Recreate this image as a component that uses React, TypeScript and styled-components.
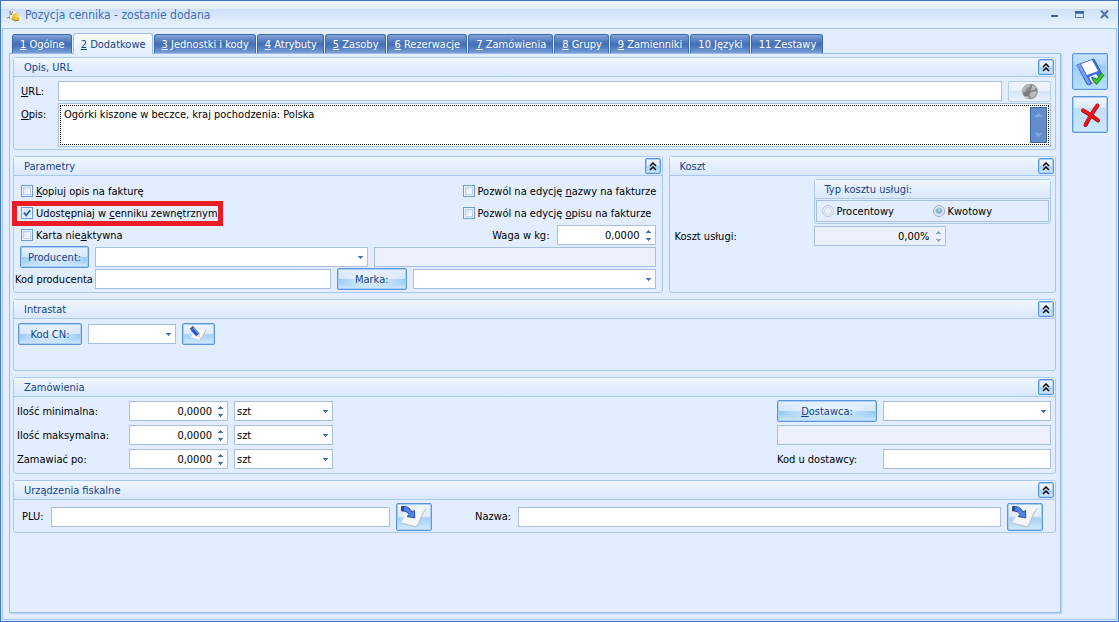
import React from "react";
import styled, { createGlobalStyle, css } from "styled-components";

const c = {
  bg: "#e2eeff",
  frame: "#3f74ba",
  line: "#a9c9f3",
  field: "#a6bfe2",
  ink: "#15428b",
};

const Global = createGlobalStyle`
  * { box-sizing: border-box; }
  body { margin: 0; background: ${c.bg}; }
  body, button, input, select, textarea {
    font-family: Tahoma, "DejaVu Sans Condensed", "DejaVu Sans", sans-serif;
    font-size: 11px;
    color: #000;
  }
`;

const Window = styled.div`
  min-height: 100vh;
  display: flex;
  flex-direction: column;
  border: 1px solid ${c.frame};
  background: ${c.bg};
`;

const TitleBar = styled.header`
  height: 27px;
  flex: none;
  display: flex;
  align-items: center;
  gap: 3px;
  padding: 0 5px;
  background: linear-gradient(#eef5fe 0, #e2edfc 8px, #cde0f8 8px, #e9f4ff 27px);
`;

const Title = styled.h1`
  margin: 0;
  flex: 1;
  font-size: 12px;
  font-weight: normal;
  color: #3e6db5;
`;

const WinButton = styled.button`
  width: 25px;
  height: 20px;
  padding: 0;
  border: 0;
  background: none;
  display: flex;
  align-items: center;
  justify-content: center;
`;

const WinButtons = styled.div`
  display: flex;
  margin-right: -4px;
`;

const Frame = styled.div`
  flex: 1;
  display: flex;
  gap: 11px;
  margin: 0 1px 1px;
  padding: 4px 8px 6px 6px;
  border: 1px solid #a3c3ee;
`;

const Main = styled.main`
  flex: 1;
  min-width: 0;
  display: flex;
  flex-direction: column;
`;

const TabStrip = styled.div`
  display: flex;
  align-items: flex-end;
  gap: 1px;
  padding-left: 3px;
  height: 20px;
`;

const Tab = styled.button<{ $active?: boolean }>`
  height: 19px;
  padding: 0 6px 0 7px;
  border: 1px solid #3b69b0;
  border-bottom: 0;
  border-radius: 3px 3px 0 0;
  color: #fff;
  white-space: nowrap;
  background: linear-gradient(#86a7da 0, #6a90cc 3px, #416eb5 9px, #5580c3 13px, #83a6dc 19px);
  ${(p) =>
    p.$active &&
    css`
      height: 21px;
      margin-bottom: -1px;
      position: relative;
      color: ${c.ink};
      border-color: #9bbdee;
      background: linear-gradient(#f8fbff, ${c.bg});
    `}
`;

const Panel = styled.div`
  flex: 1;
  display: flex;
  flex-direction: column;
  gap: 6px;
  padding: 3px 4px 6px 3px;
  border: 1px solid #9bbdee;
  box-shadow: 1px 1px 1px #b9d0f0;
`;

const Columns = styled.div`
  display: flex;
  gap: 6px;
`;

const GroupBox = styled.section<{ $grow?: number; $min?: number }>`
  display: flex;
  flex-direction: column;
  flex: ${(p) => (p.$grow ? `${p.$grow} 1 0` : "none")};
  min-width: 0;
  min-height: ${(p) => p.$min ?? 0}px;
  border: 1px solid ${c.line};
  border-radius: 3px;
`;

const GroupHead = styled.div`
  height: 19px;
  flex: none;
  display: flex;
  align-items: center;
  justify-content: space-between;
  padding: 0 1px 0 10px;
  border-bottom: 1px solid ${c.line};
  background: linear-gradient(#f0f7ff, #d8e8fd);
`;

const GroupTitle = styled.h2`
  margin: 0;
  font-size: 11px;
  font-weight: normal;
  color: ${c.ink};
`;

const GroupBody = styled.div<{ $gap?: number; $pad: string }>`
  display: flex;
  flex-direction: column;
  gap: ${(p) => p.$gap ?? 0}px;
  padding: ${(p) => p.$pad};
`;

const glossy = css`
  border: 1px solid #5e96dd;
  border-radius: 2px;
  box-shadow: inset 0 0 0 1px #a9cdf5;
  background: linear-gradient(#eff7ff 0, #dcebfc 48%, #b4d7f6 50%, #a8d2f5 60%, #d3edfd 100%);
`;

const Collapse = styled.button`
  ${glossy}
  width: 16px;
  height: 16px;
  padding: 0;
  display: flex;
  align-items: center;
  justify-content: center;
`;

const Button = styled.button<{ $w: number }>`
  ${glossy}
  width: ${(p) => p.$w}px;
  height: 22px;
  flex: none;
  padding: 0;
  color: ${c.ink};
  display: flex;
  align-items: center;
  justify-content: center;
`;

const CaptionButton = styled(Button)`
  background: radial-gradient(ellipse at center, rgba(235, 245, 255, 0.75) 25%, rgba(235, 245, 255, 0) 70%),
    linear-gradient(#e6f1fe 0, #d3e5fa 48%, #93c4f2 50%, #a9d4f7 75%, #d3edfd 100%);
`;

const GlobeButton = styled(Button)`
  height: 21px;
  border-color: #b4cdee;
  box-shadow: none;
  background: linear-gradient(#f1f6fd 0, #e7f0fb 48%, #d6e5f6 50%, #e8f3fd 100%);
`;

const ImportButton = styled(Button)`
  height: 28px;
`;

const SideBar = styled.aside`
  flex: none;
  display: flex;
  flex-direction: column;
  gap: 6px;
  padding-top: 20px;
`;

const SideButton = styled(Button)<{ $hot?: boolean }>`
  height: 37px;
  background: ${(p) =>
    p.$hot
      ? "linear-gradient(#c6e2fc 0, #b3d8fa 30%, #9accf6 32%, #b5e0fb 100%)"
      : "linear-gradient(#eff7ff 0, #dcebfc 30%, #c0dff8 32%, #c9e8fc 100%)"};
`;

const Row = styled.div<{ $gap?: number; $h?: number; $top?: boolean }>`
  display: flex;
  align-items: ${(p) => (p.$top ? "flex-start" : "center")};
  gap: ${(p) => p.$gap ?? 6}px;
  min-height: ${(p) => p.$h ?? 22}px;
`;

const Lead = styled.div<{ $w: number; $inset?: number; $drop?: number }>`
  flex: none;
  width: ${(p) => p.$w}px;
  padding-left: ${(p) => p.$inset ?? 0}px;
  padding-top: ${(p) => p.$drop ?? 0}px;
  white-space: nowrap;
`;

const Spacer = styled.div`
  flex: 1;
`;

const fieldBox = css`
  height: 20px;
  border: 1px solid ${c.field};
  border-radius: 0;
  background: #fff;
  padding: 0 2px;
  outline: 0;
`;

const TextField = styled.input<{ $grow?: number; $w?: number }>`
  ${fieldBox}
  min-width: 0;
  flex: ${(p) => (p.$w ? `0 0 ${p.$w}px` : `${p.$grow ?? 1} 1 0`)};
  &:disabled {
    background: #ebf0fa;
  }
`;

const Combo = styled.div<{ $grow?: number; $w?: number }>`
  position: relative;
  min-width: 0;
  flex: ${(p) => (p.$w ? `0 0 ${p.$w}px` : `${p.$grow ?? 1} 1 0`)};
  display: flex;
  svg {
    position: absolute;
    right: 5px;
    top: 9px;
    pointer-events: none;
  }
`;

const Select = styled.select`
  ${fieldBox}
  width: 100%;
  appearance: none;
`;

const SpinBox = styled.div<{ $w: number; $off?: boolean }>`
  ${fieldBox}
  flex: none;
  width: ${(p) => p.$w}px;
  display: flex;
  background: ${(p) => (p.$off ? "#ebf0fa" : "#fff")};
  input {
    flex: 1;
    min-width: 0;
    border: 0;
    outline: 0;
    padding: 0;
    text-align: right;
    background: none;
    color: #000;
  }
`;

const SpinButtons = styled.div`
  display: flex;
  flex-direction: column;
  justify-content: center;
  gap: 4px;
  padding-left: 6px;
  width: 13px;
`;

const Arrow = styled.button`
  display: block;
  height: 4px;
  padding: 0;
  border: 0;
  background: none;
  line-height: 0;
  svg {
    display: block;
  }
`;

const MemoBox = styled.div`
  flex: 1;
  height: 44px;
  padding: 1px;
  border: 1px solid ${c.field};
  background: #fff;
`;

const MemoFocus = styled.div`
  height: 100%;
  display: flex;
  padding: 1px;
  border: 1px dotted #000;
  textarea {
    flex: 1;
    padding: 1px 2px 0;
    border: 0;
    outline: 0;
    resize: none;
    overflow: hidden;
    line-height: 14px;
    background: none;
  }
`;

const Scroller = styled.div`
  width: 17px;
  display: flex;
  flex-direction: column;
  justify-content: space-between;
  align-items: center;
  padding: 5px 0;
  border: 1px solid #3a66a8;
  background: #638dca;
`;

const Check = styled.label<{ $marked?: boolean }>`
  position: relative;
  display: flex;
  align-items: center;
  gap: 3px;
  white-space: nowrap;
  ${(p) =>
    p.$marked &&
    css`
      &::after {
        content: "";
        position: absolute;
        inset: -6px -10px -6px -9px;
        border: 5px solid #ed1c24;
      }
    `}
`;

const Tick = styled.input`
  appearance: none;
  flex: none;
  width: 12px;
  height: 12px;
  margin: 0;
  border: 1px solid #6f9bd8;
  background: linear-gradient(135deg, #d5e2f5, #fff) center / 6px 6px no-repeat, #b9d0f0;
  box-shadow: inset 0 0 0 1px #e9f2fe;
  &:checked {
    background: url("data:image/svg+xml,%3Csvg xmlns='http://www.w3.org/2000/svg' viewBox='0 0 10 10'%3E%3Cpath d='M2 4.6L4.2 7.4L8.2 2.2' fill='none' stroke='%232a62b0' stroke-width='1.8'/%3E%3C/svg%3E")
        center / 10px 10px no-repeat,
      #dce8f9;
  }
`;

const Dot = styled.input`
  appearance: none;
  flex: none;
  width: 12px;
  height: 12px;
  margin: 0;
  border: 1px solid #b4c6dd;
  border-radius: 50%;
  background: #e9eff7;
  box-shadow: inset 0 0 0 1px #f5f8fc, inset 0 0 0 2px #ccd7e6;
  &:checked {
    border-color: #93b0d2;
    background: radial-gradient(circle at 50% 40%, #b8d6e8 0, #7ba6c8 3px, #dbe7f3 4px);
  }
`;

const CostTypes = styled.div`
  display: flex;
  margin: 1px;
  height: 22px;
  padding-left: 5px;
  border: 1px solid ${c.field};
  label {
    width: 111px;
  }
`;

const RightCol = styled.div`
  flex: none;
  width: 193px;
  display: flex;
  align-items: center;
  justify-content: space-between;
`;

const WeightLabel = styled.label`
  flex: 1;
  text-align: right;
  padding-right: 7px;
`;

const Split = styled.div`
  display: flex;
  justify-content: space-between;
`;

const Stack = styled.div<{ $w: number }>`
  width: ${(p) => p.$w}px;
  display: flex;
  flex-direction: column;
  gap: 2px;
`;

const DownArrow = () => (
  <svg width="5" height="3" viewBox="0 0 5 3" shapeRendering="crispEdges">
    <path d="M0 0h5v1H0zM1 1h3v1H1zM2 2h1v1H2z" fill="#3f74ba" />
  </svg>
);

const Chevrons = () => (
  <svg width="8" height="9" viewBox="0 0 8 9" fill="none" stroke="#000" strokeWidth="1.5">
    <path d="M1 4L4 1L7 4M1 8L4 5L7 8" />
  </svg>
);

const AppIcon = () => (
  <svg width="16" height="16" viewBox="0 0 16 16">
    <path d="M4 4L7 2L12 6L9 12L3 11Z" fill="#f4f4f2" stroke="#aaa" strokeWidth=".6" />
    <path d="M1 11l3-1M4 4l1 4M7 4l-2 4" stroke="#777" strokeWidth="1" />
    <path d="M7 7l3-1 3 3v4l-4 1-3-3z" fill="#e8bf2e" />
    <ellipse cx="11" cy="9" rx="2.500" ry="1.500" fill="#f7dc6a" />
    <path d="M6 12l3 2 4-1" stroke="#9b7c10" fill="none" />
  </svg>
);

const Globe = () => (
  <svg width="18" height="17" viewBox="0 0 18 17">
    <circle cx="9" cy="8.500" r="7.800" fill="#8e8e8e" />
    <path d="M3 3.500C5 1 8 .8 10 1.200L8 4 5 6 4 9 1.600 8C1.600 6 2 4.600 3 3.500Z" fill="#b5b5b5" />
    <path d="M11 2l4 2-2 3-3 1zM10 9l4-1 2 2-3 4-3 1-1-3z" fill="#bcbcbc" />
    <path d="M2 11l4-1 1 4-1 2z" fill="#777" />
    <path d="M5 15L11 2M4 10L15 7" stroke="#747474" strokeWidth=".9" />
    <path d="M3 13l5 1-2 2z" fill="#dadada" />
  </svg>
);

const Floppy = () => (
  <svg width="30" height="30" viewBox="0 0 30 30">
    <path d="M2 8L19 2L28 19L14 28L12 27Z" fill="#3f6fe0" stroke="#2447a8" strokeWidth=".8" />
    <path d="M2 8L5 7L15 26L13.500 28Z" fill="#7ba2f5" />
    <path d="M6 7L17 3L23 14L12 18Z" fill="#fff" />
    <path d="M14 20L21 17L25 22L17 26Z" fill="#e8eef9" />
    <path d="M16 20.500l2-1 3 4-2 1z" fill="#2b4fae" />
    <path d="M18.500 21.500L21.500 25L28 17" fill="none" stroke="#1b7d12" strokeWidth="4" />
    <path d="M18.500 21.500L21.500 25L28 17" fill="none" stroke="#34cf22" strokeWidth="2.400" />
  </svg>
);

const Cross = () => (
  <svg width="24" height="26" viewBox="0 0 24 26" strokeLinecap="round" fill="none">
    <path d="M5 8.500Q13 13 20 18.500M19.500 3.500Q14 11 7.500 23" stroke="#8d1010" strokeWidth="4" />
    <path d="M5 8Q13 12.500 20 18M19.500 3Q14 10.500 7.500 22.500" stroke="#ee1616" strokeWidth="3" />
  </svg>
);

const Pencil = () => (
  <svg width="19" height="16" viewBox="0 0 19 16">
    <path d="M6 4L17 3.500L14 11L11 14L2 11Z" fill="#fafafa" />
    <path d="M17 3.500Q15 8 13.500 11L11 14" stroke="#b4b8bf" strokeWidth="1" fill="none" />
    <path d="M3.500 3L9 9" stroke="#2b59c8" strokeWidth="4.500" />
    <path d="M4.500 2L10 8" stroke="#6b93ee" strokeWidth="1.500" />
    <path d="M1.500 3.500L4.500 .6" stroke="#54585f" strokeWidth="2" />
    <path d="M7.500 10L10.500 7.500L12 12Z" fill="#e3d3bb" />
  </svg>
);

const ImportIcon = () => (
  <svg width="28" height="24" viewBox="0 0 28 24">
    <path d="M7 4L26 3.500Q21 10 19 18L16 22L1 18Q5 12 7 4Z" fill="#f5f6f8" />
    <path d="M26 3.500Q21 10 19 18L16.500 22L1 18" fill="none" stroke="#b0b5bc" strokeWidth=".9" />
    <path d="M1.500 1.500Q9 .5 12 7L14.500 5.500L14.800 13L7 11.500L9.200 9.500Q6.500 5.500 1.500 6Z" fill="#4d83ee" stroke="#25458f" strokeWidth=".9" />
    <path d="M1.500 1.500L4 1.500V6H1.500Z" fill="#344a78" />
  </svg>
);

type GroupProps = {
  title: string;
  pad: string;
  gap?: number;
  grow?: number;
  min?: number;
  children: React.ReactNode;
};

const Group = ({ title, pad, gap, grow, min, children }: GroupProps) => (
  <GroupBox $grow={grow} $min={min}>
    <GroupHead>
      <GroupTitle>{title}</GroupTitle>
      <Collapse aria-label={`Zwiń: ${title}`}>
        <Chevrons />
      </Collapse>
    </GroupHead>
    <GroupBody $pad={pad} $gap={gap}>
      {children}
    </GroupBody>
  </GroupBox>
);

type SpinProps = { id?: string; w: number; value: string; off?: boolean };

const Spin = ({ id, w, value, off }: SpinProps) => (
  <SpinBox $w={w} $off={off}>
    <input id={id} defaultValue={value} disabled={off} />
    <SpinButtons>
      {["M2 0h1v1H2zM1 1h3v1H1zM0 2h5v1H0z", "M0 0h5v1H0zM1 1h3v1H1zM2 2h1v1H2z"].map((d, i) => (
        <Arrow key={d} tabIndex={-1} disabled={off} aria-label={i ? "Mniej" : "Więcej"}>
          <svg width="5" height="3" viewBox="0 0 5 3" shapeRendering="crispEdges">
            <path d={d} fill={off ? "#8fa9cb" : "#3f74ba"} />
          </svg>
        </Arrow>
      ))}
    </SpinButtons>
  </SpinBox>
);

type DropProps = { label: string; w?: number; grow?: number; value?: string };

const Drop = ({ label, w, grow, value = "" }: DropProps) => (
  <Combo $w={w} $grow={grow}>
    <Select aria-label={label} defaultValue={value}>
      <option>{value}</option>
    </Select>
    <DownArrow />
  </Combo>
);

const tabs: [string, string][] = [
  ["1", " Ogólne"],
  ["2", " Dodatkowe"],
  ["3", " Jednostki i kody"],
  ["4", " Atrybuty"],
  ["5", " Zasoby"],
  ["6", " Rezerwacje"],
  ["7", " Zamówienia"],
  ["8", " Grupy"],
  ["9", " Zamienniki"],
  ["", "10 Języki"],
  ["", "11 Zestawy"],
];

export default function App() {
  return (
    <Window>
      <Global />
      <TitleBar>
        <AppIcon />
        <Title>Pozycja cennika - zostanie dodana</Title>
        <WinButtons>
          <WinButton aria-label="Minimalizuj">
            <svg width="9" height="9" viewBox="0 0 9 9" shapeRendering="crispEdges">
              <path d="M1 5h7v2H1z" fill="#3d6599" />
            </svg>
          </WinButton>
          <WinButton aria-label="Maksymalizuj">
            <svg width="9" height="9" viewBox="0 0 9 9" shapeRendering="crispEdges">
              <path d="M0 1h9v7H0zM1 4v3h7V4z" fill="#5c80ae" fillRule="evenodd" />
              <path d="M0 1h9v2H0z" fill="#3d6599" />
            </svg>
          </WinButton>
          <WinButton aria-label="Zamknij">
            <svg width="9" height="9" viewBox="0 0 9 9">
              <path d="M1 0.500L8 8M8 0.500L1 8" stroke="#55779f" strokeWidth="2" />
            </svg>
          </WinButton>
        </WinButtons>
      </TitleBar>
      <Frame>
        <Main>
          <TabStrip role="tablist">
            {tabs.map(([key, text], i) => (
              <Tab key={text} role="tab" aria-selected={i === 1} $active={i === 1}>
                {key && <u>{key}</u>}
                {text}
              </Tab>
            ))}
          </TabStrip>
          <Panel role="tabpanel">
            <Group title="Opis, URL" pad="3px 4px 2px 7px" gap={1}>
              <Row>
                <Lead $w={31}>
                  <label htmlFor="url">
                    <u>U</u>RL:
                  </label>
                </Lead>
                <TextField id="url" />
                <GlobeButton $w={43} disabled aria-label="Otwórz stronę">
                  <Globe />
                </GlobeButton>
              </Row>
              <Row $h={44} $top>
                <Lead $w={31} $drop={5}>
                  <label htmlFor="opis">
                    <u>O</u>pis:
                  </label>
                </Lead>
                <MemoBox>
                  <MemoFocus>
                    <textarea id="opis" defaultValue="Ogórki kiszone w beczce, kraj pochodzenia: Polska" />
                    <Scroller>
                      <Arrow disabled aria-label="W górę">
                        <svg width="9" height="4" viewBox="0 0 9 4">
                          <path d="M0 4L4.500 0L9 4Z" fill="#86a8dc" />
                        </svg>
                      </Arrow>
                      <Arrow disabled aria-label="W dół">
                        <svg width="9" height="4" viewBox="0 0 9 4">
                          <path d="M0 0L4.500 4L9 0Z" fill="#86a8dc" />
                        </svg>
                      </Arrow>
                    </Scroller>
                  </MemoFocus>
                </MemoBox>
              </Row>
            </Group>

            <Columns>
              <Group title="Parametry" pad="4px 6px 2px 1px" grow={650}>
                <Row>
                  <Lead $w={200} $inset={6}>
                    <Check>
                      <Tick type="checkbox" />
                      <span>
                        <u>K</u>opiuj opis na fakturę
                      </span>
                    </Check>
                  </Lead>
                  <Spacer />
                  <RightCol>
                    <Check>
                      <Tick type="checkbox" />
                      <span>
                        Pozwól na edycję <u>n</u>azwy na fakturze
                      </span>
                    </Check>
                  </RightCol>
                </Row>
                <Row>
                  <Lead $w={198} $inset={6}>
                    <Check $marked>
                      <Tick type="checkbox" defaultChecked />
                      <span>
                        Udostępniaj w <u>c</u>enniku zewnętrznym
                      </span>
                    </Check>
                  </Lead>
                  <Spacer />
                  <RightCol>
                    <Check>
                      <Tick type="checkbox" />
                      <span>
                        Pozwól na edycję <u>o</u>pisu na fakturze
                      </span>
                    </Check>
                  </RightCol>
                </Row>
                <Row>
                  <Lead $w={200} $inset={6}>
                    <Check>
                      <Tick type="checkbox" />
                      <span>
                        Karta nie<u>a</u>ktywna
                      </span>
                    </Check>
                  </Lead>
                  <Spacer />
                  <RightCol>
                    <WeightLabel htmlFor="waga">Waga w kg:</WeightLabel>
                    <Spin id="waga" w={99} value="0,0000" />
                  </RightCol>
                </Row>
                <Row>
                  <Lead $w={74} $inset={5}>
                    <CaptionButton $w={69}>Producent:</CaptionButton>
                  </Lead>
                  <Drop label="Producent" grow={273} />
                  <TextField aria-label="Nazwa producenta" disabled $grow={276} />
                </Row>
                <Row>
                  <Lead $w={74}>
                    <label htmlFor="kodp">Kod producenta</label>
                  </Lead>
                  <TextField id="kodp" $grow={230} />
                  <CaptionButton $w={70}>Marka:</CaptionButton>
                  <Drop label="Marka" grow={243} />
                </Row>
              </Group>

              <Group title="Koszt" pad="3px 4px 3px 5px" gap={1} grow={387}>
                <Row $gap={0}>
                  <Lead $w={139} />
                  <GroupBox $grow={1}>
                    <GroupHead>
                      <GroupTitle>Typ kosztu usługi:</GroupTitle>
                    </GroupHead>
                    <CostTypes role="radiogroup" aria-label="Typ kosztu usługi">
                      <Check>
                        <Dot type="radio" name="typ" disabled />
                        Procentowy
                      </Check>
                      <Check>
                        <Dot type="radio" name="typ" defaultChecked disabled />
                        Kwotowy
                      </Check>
                    </CostTypes>
                  </GroupBox>
                </Row>
                <Row $gap={0}>
                  <Lead $w={139}>
                    <label htmlFor="koszt">Koszt usługi:</label>
                  </Lead>
                  <Spin id="koszt" w={132} value="0,00%" off />
                </Row>
              </Group>
            </Columns>

            <Group title="Intrastat" pad="4px 4px" min={72}>
              <Row>
                <CaptionButton $w={64}>Kod CN:</CaptionButton>
                <Drop label="Kod CN" w={88} />
                <Button $w={33} aria-label="Edytuj kod">
                  <Pencil />
                </Button>
              </Row>
            </Group>

            <Group title="Zamówienia" pad="3px 4px 2px 3px" min={97}>
              <Split>
                <Stack $w={320}>
                  {["Ilość minimalna:", "Ilość maksymalna:", "Zamawiać po:"].map((t, i) => (
                    <Row key={t}>
                      <Lead $w={106}>
                        <label htmlFor={`ilosc${i}`}>{t}</label>
                      </Lead>
                      <Spin id={`ilosc${i}`} w={99} value="0,0000" />
                      <Drop label="Jednostka" w={99} value="szt" />
                    </Row>
                  ))}
                </Stack>
                <Stack $w={274}>
                  <Row>
                    <CaptionButton $w={100}>
                      <span>
                        <u>D</u>ostawca:
                      </span>
                    </CaptionButton>
                    <Drop label="Dostawca" />
                  </Row>
                  <Row>
                    <TextField aria-label="Nazwa dostawcy" disabled />
                  </Row>
                  <Row>
                    <Lead $w={100}>
                      <label htmlFor="kodd">Kod u dostawcy:</label>
                    </Lead>
                    <TextField id="kodd" />
                  </Row>
                </Stack>
              </Split>
            </Group>

            <Group title="Urządzenia fiskalne" pad="2px 12px 1px 8px">
              <Row $h={29}>
                <Lead $w={23}>
                  <label htmlFor="plu">PLU:</label>
                </Lead>
                <TextField id="plu" $grow={333} />
                <ImportButton $w={36} aria-label="Pobierz PLU">
                  <ImportIcon />
                </ImportButton>
                <Lead $w={74} $inset={37}>
                  <label htmlFor="nazwa">Nazwa:</label>
                </Lead>
                <TextField id="nazwa" $grow={477} />
                <ImportButton $w={36} aria-label="Pobierz nazwę">
                  <ImportIcon />
                </ImportButton>
              </Row>
            </Group>
          </Panel>
        </Main>
        <SideBar>
          <SideButton $w={36} $hot aria-label="Zapisz">
            <Floppy />
          </SideButton>
          <SideButton $w={36} aria-label="Anuluj">
            <Cross />
          </SideButton>
        </SideBar>
      </Frame>
    </Window>
  );
}
